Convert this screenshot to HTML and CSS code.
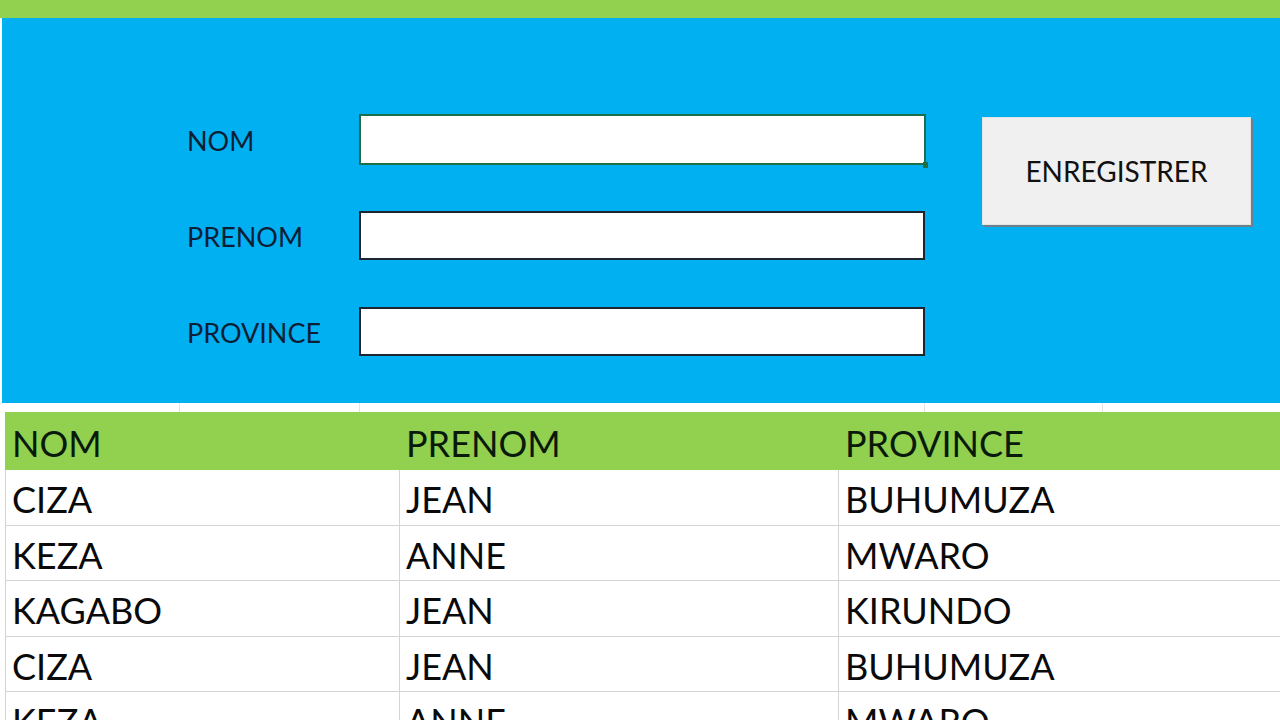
FILE: index.html
```html
<!DOCTYPE html>
<html lang="fr">
<head>
<meta charset="utf-8">
<title>Formulaire</title>
<link rel="stylesheet" href="styles.css">
</head>
<body>
<div class="topbar"></div>
<div class="panel">
  <div class="form">
    <div class="field">
      <label class="label">NOM</label>
      <div class="input input-active"><span class="handle"></span></div>
    </div>
    <div class="field">
      <label class="label">PRENOM</label>
      <div class="input"></div>
    </div>
    <div class="field">
      <label class="label">PROVINCE</label>
      <div class="input"></div>
    </div>
  </div>
  <button class="btn">ENREGISTRER</button>
</div>
<div class="sep">
  <div class="sep-cell w180"></div>
  <div class="sep-cell w180"></div>
  <div class="sep-cell w565"></div>
  <div class="sep-cell w178"></div>
  <div class="sep-cell last"></div>
</div>
<table class="grid">
  <colgroup>
    <col class="c1"><col class="c2"><col class="c3">
  </colgroup>
  <thead>
    <tr><th>NOM</th><th>PRENOM</th><th>PROVINCE</th></tr>
  </thead>
  <tbody>
    <tr><td>CIZA</td><td>JEAN</td><td>BUHUMUZA</td></tr>
    <tr><td>KEZA</td><td>ANNE</td><td>MWARO</td></tr>
    <tr><td>KAGABO</td><td>JEAN</td><td>KIRUNDO</td></tr>
    <tr><td>CIZA</td><td>JEAN</td><td>BUHUMUZA</td></tr>
    <tr><td>KEZA</td><td>ANNE</td><td>MWARO</td></tr>
  </tbody>
</table>
</body>
</html>
```
FILE: styles.css
```css
html, body {
  margin: 0;
  padding: 0;
  background: #ffffff;
  overflow: hidden;
  height: 720px;
}
body {
  font-family: Lato, "Open Sans", "Liberation Sans", sans-serif;
}
.topbar {
  height: 18px;
  background: #92d050;
}
.panel {
  height: 385px;
  margin-left: 2px;
  background: #00b0f0;
  display: flex;
  align-items: flex-start;
  box-sizing: border-box;
  padding: 96px 0 0 185px;
}
.form {
  display: flex;
  flex-direction: column;
  gap: 46px;
}
.field {
  display: flex;
  align-items: center;
  height: 50px;
}
.label {
  width: 172px;
  font-size: 27px;
  color: #0c1e36;
  line-height: 1;
  padding-top: 3px;
}
.input {
  position: relative;
  width: 566px;
  height: 49px;
  box-sizing: border-box;
  background: #ffffff;
  border: 2px solid #1d2630;
}
.input-active {
  border-color: #1f6e4a;
  height: 51px;
  width: 567px;
}
.handle {
  position: absolute;
  right: -4px;
  bottom: -5px;
  width: 5px;
  height: 6px;
  background: #1f6e4a;
}
.btn {
  margin: 3px 0 0 56px;
  width: 269px;
  height: 108px;
  background: #f0f0f0;
  border: 1px solid #e4e4e4;
  box-shadow: 2px 2px 0 #6e808e;
  font-family: inherit;
  font-size: 28px;
  color: #111111;
  padding: 0;
  cursor: pointer;
}
.sep {
  height: 9px;
  display: flex;
}
.sep-cell {
  height: 100%;
  border-right: 1px solid #e4e4e4;
  box-sizing: border-box;
}
.w180 { width: 180px; }
.w565 { width: 565px; }
.w178 { width: 178px; }
.sep-cell.last { flex: 1; border-right: none; }
.grid {
  margin-left: 5px;
  width: 1275px;
  border-collapse: collapse;
  table-layout: fixed;
  font-size: 36px;
}
.grid .c1 { width: 394px; }
.grid .c2 { width: 439px; }
.grid th, .grid td {
  box-sizing: border-box;
  text-align: left;
  font-weight: normal;
  padding: 4px 0 0 6px;
  border: 1px solid #d4d4d4;
  white-space: nowrap;
  overflow: hidden;
  line-height: 1;
}
.grid th {
  height: 57px;
  background: #92d050;
  color: #0a1a0a;
  border-color: #92d050;
}
.grid td {
  height: 55.5px;
  color: #0a0a0a;
}
.grid td:last-child { border-right: none; }
```
